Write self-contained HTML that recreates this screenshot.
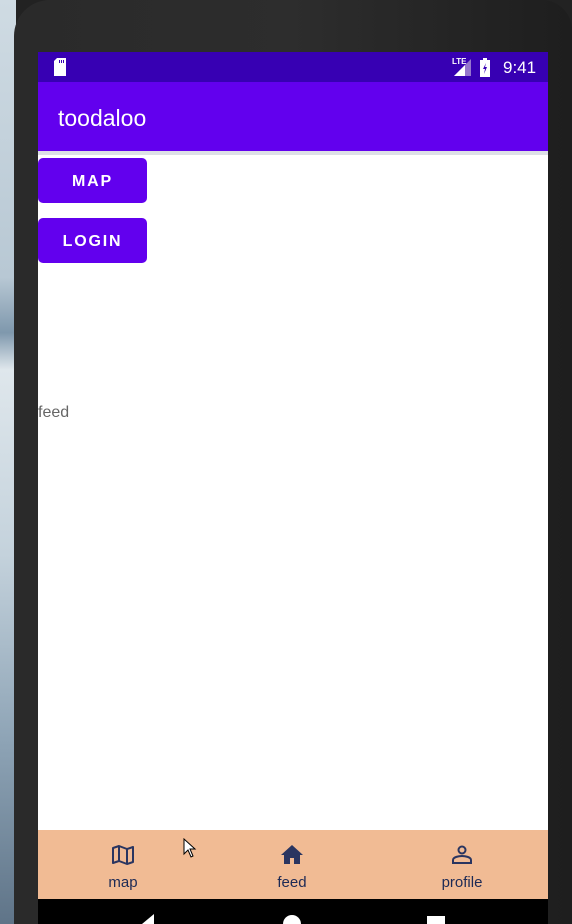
<!DOCTYPE html>
<html><head><meta charset="utf-8"><style>
*{margin:0;padding:0;box-sizing:border-box}
body{width:572px;height:924px;overflow:hidden;position:relative;background:#222;font-family:"Liberation Sans",sans-serif}
.photo{position:absolute;left:0;top:0;width:16px;height:924px;background:linear-gradient(#cfdbe3 0%,#b8c8d4 30%,#7f98ad 36%,#dfe7ec 40%,#c4d2dc 60%,#8ea4b6 80%,#5f7488 100%)}
.bez{position:absolute;left:14px;top:0;width:558px;height:924px;background:linear-gradient(90deg,#2a2a2a,#2d2d2d 50%,#1e1e1e);border-radius:36px 30px 0 0}
.screen{position:absolute;left:38px;top:52px;width:510px;height:847px;background:#fff}
.status{height:30px;background:#3700b3;position:relative;color:#fff}
.app{height:69px;background:#6200ee;color:#fff;font-size:23px;padding:23px 0 0 20px}
.line{height:4px;background:#dde0e6}
.btn{position:absolute;left:0;width:109px;height:45px;background:#6200ee;border-radius:5px;color:#fff;font-size:16px;letter-spacing:1.8px;font-weight:bold;display:flex;align-items:center;justify-content:center;padding-top:2px}
.nav{position:absolute;left:0;top:778px;width:510px;height:69px;background:#f1bb94;color:#1d2a55;font-size:15px}
.it{position:absolute;top:0;width:120px;text-align:center}
.it svg{display:block;margin:13px auto 7px}
.sys{position:absolute;left:38px;top:899px;width:510px;height:25px;background:#000}
</style></head><body>
<div class="photo"></div>
<div class="bez"></div>
<div class="screen">
 <div class="status">
  <svg style="position:absolute;left:15px;top:6px" width="14" height="18" viewBox="0 0 14 18"><path d="M4 0H13V18H1V3Z" fill="#fff"/><rect x="6" y="2" width="1" height="3" fill="#3700b3"/><rect x="8" y="2" width="1" height="3" fill="#3700b3"/><rect x="10" y="2" width="1" height="3" fill="#3700b3"/></svg>
  <span style="position:absolute;left:414px;top:5px;font-size:8px;font-weight:bold">LTE</span>
  <svg style="position:absolute;left:416px;top:7px" width="17" height="17"><path d="M17 0V17H0Z" fill="#9575cd"/><path d="M11 6V17H0Z" fill="#fff"/></svg>
  <svg style="position:absolute;left:442px;top:6px" width="10" height="19"><rect x="0" y="2" width="10" height="17" fill="#fff"/><rect x="3" y="0" width="4" height="3" fill="#fff"/><path d="M6 5L3 11H5L4 16L7 9H5Z" fill="#3700b3"/></svg>
  <span style="position:absolute;left:465px;top:6px;font-size:17px">9:41</span>
 </div>
 <div class="app">toodaloo</div>
 <div class="line"></div>
 <div class="btn" style="top:106px">MAP</div>
 <div class="btn" style="top:166px">LOGIN</div>
 <div style="position:absolute;left:0;top:352px;font-size:16px;color:#666">feed</div>
 <div class="nav">
  <div class="it" style="left:25px"><svg width="24" height="24" viewBox="0 0 24 24"><path d="M2 5L8 3L16 6L22 4V19L16 21L8 18L2 20Z M8 3V18 M16 6V21" fill="none" stroke="#2a3560" stroke-width="2" stroke-linejoin="round"/></svg>map</div>
  <div class="it" style="left:194px"><svg width="24" height="24" viewBox="0 0 24 24"><path d="M12 2L1 12H4V21H10V15H14V21H20V12H23Z" fill="#2a3560"/></svg>feed</div>
  <div class="it" style="left:364px"><svg width="24" height="24" viewBox="0 0 24 24"><circle cx="12" cy="7" r="3.5" fill="none" stroke="#2a3560" stroke-width="2"/><path d="M3 20V17C3 14 9 13 12 13C15 13 21 14 21 17V20Z" fill="none" stroke="#2a3560" stroke-width="2"/></svg>profile</div>
  <svg style="position:absolute;left:145px;top:8px" width="14" height="20"><path d="M1 1V16L5 12L8 19L10 18L7 11H12Z" fill="#fff" stroke="#000"/></svg>
 </div>
</div>
<div class="sys">
 <svg style="position:absolute;left:100px;top:15px" width="20" height="10"><path d="M16 0L4 10H16Z" fill="#fff"/></svg>
 <svg style="position:absolute;left:244px;top:15px" width="20" height="10"><circle cx="10" cy="10" r="9" fill="#fff"/></svg>
 <svg style="position:absolute;left:388px;top:17px" width="20" height="8"><rect x="1" y="0" width="18" height="8" fill="#fff"/></svg>
</div>
</body></html>
